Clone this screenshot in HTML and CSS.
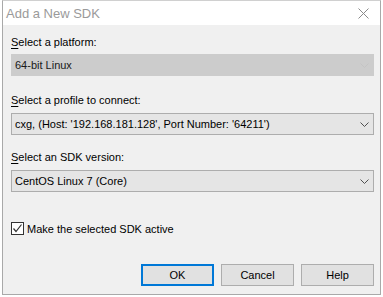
FILE: index.html
```html
<!DOCTYPE html>
<html>
<head>
<meta charset="utf-8">
<link rel="stylesheet" href="styles.css">
</head>
<body>
<div class="window">
  <div class="titlebar">
    <span class="title">Add a New SDK</span>
    <svg class="close" width="11" height="11" viewBox="0 0 11 11"><path d="M0.5 0.5 L10.5 10.5 M10.5 0.5 L0.5 10.5" stroke="#8a8a8a" stroke-width="1" fill="none"/></svg>
  </div>
  <div class="content">
    <div class="label label-first"><u>S</u>elect a platform:</div>
    <div class="combo disabled">
      <span class="value">64-bit Linux</span>
      <svg class="chev" width="9" height="5" viewBox="0 0 9 5"><path d="M0.5 0.5 L4.5 4.5 L8.5 0.5" stroke="#c4c4c4" fill="none"/></svg>
    </div>
    <div class="label label-second"><u>S</u>elect a profile to connect:</div>
    <div class="combo">
      <span class="value">cxg, (Host: '192.168.181.128', Port Number: '64211')</span>
      <svg class="chev" width="9" height="5" viewBox="0 0 9 5"><path d="M0.5 0.5 L4.5 4.5 L8.5 0.5" stroke="#505050" fill="none"/></svg>
    </div>
    <div class="label label-third"><u>S</u>elect an SDK version:</div>
    <div class="combo">
      <span class="value">CentOS Linux 7 (Core)</span>
      <svg class="chev" width="9" height="5" viewBox="0 0 9 5"><path d="M0.5 0.5 L4.5 4.5 L8.5 0.5" stroke="#505050" fill="none"/></svg>
    </div>
    <div class="check-row">
      <span class="checkbox"><svg width="11" height="11" viewBox="0 0 11 11"><path d="M1.5 5.5 L4 8.5 L9.5 1.5" stroke="#333" stroke-width="1.2" fill="none"/></svg></span>
      <span class="check-label">Make the selected SDK active</span>
    </div>
    <div class="buttons">
      <button class="btn btn-default">OK</button>
      <button class="btn">Cancel</button>
      <button class="btn">Help</button>
    </div>
  </div>
</div>
</body>
</html>
```
FILE: styles.css
```css
html, body {
  margin: 0;
  padding: 0;
  background: #ffffff;
}
body {
  font-family: "Liberation Sans", Arial, sans-serif;
  font-size: 11px;
  color: #000;
}
.window {
  margin-left: 2px;
  width: 379px;
  height: 295px;
  box-sizing: border-box;
  border: 1px solid #a9a9a9;
  border-top-color: #d0d0d0;
  background: #f0f0f0;
  display: flex;
  flex-direction: column;
}
.titlebar {
  height: 24px;
  background: #ffffff;
  display: flex;
  align-items: center;
  padding-left: 3px;
  padding-right: 11px;
  flex: none;
}
.title {
  font-size: 13px;
  color: #9a9a9a;
  flex: 1;
}
.close {
  display: block;
  margin-top: 1px;
}
.content {
  display: flex;
  flex-direction: column;
  padding: 0 6px 0 8px;
}
.label {
  line-height: 15px;
  height: 15px;
}
.label u {
  text-decoration-thickness: 1px;
  text-underline-offset: 2px;
}
.label-first {
  margin-top: 10px;
  margin-bottom: 4px;
}
.label-second {
  margin-top: 17px;
  margin-bottom: 5px;
}
.label-third {
  margin-top: 15px;
  margin-bottom: 5px;
}
.combo {
  height: 22px;
  box-sizing: border-box;
  border: 1px solid #adadad;
  background: #e5e5e5;
  display: flex;
  align-items: center;
  padding: 0 4px 0 3px;
}
.combo.disabled {
  background: #cccccc;
  border-color: #cccccc;
  color: #1a1a1a;
}
.value {
  flex: 1;
  white-space: nowrap;
  overflow: hidden;
}
.chev {
  display: block;
}
.check-row {
  margin-top: 29px;
  display: flex;
  align-items: center;
  height: 15px;
}
.checkbox {
  width: 13px;
  height: 13px;
  box-sizing: border-box;
  border: 1px solid #333;
  background: #fff;
  display: flex;
  align-items: center;
  justify-content: center;
  margin-right: 3px;
}
.checkbox svg {
  display: block;
}
.buttons {
  margin-top: 28px;
  display: flex;
  justify-content: flex-end;
  gap: 7px;
}
.btn {
  width: 73px;
  height: 22px;
  box-sizing: border-box;
  border: 1px solid #adadad;
  background: #e1e1e1;
  font-family: inherit;
  font-size: 11px;
  color: #000;
  padding: 0;
  margin: 0;
}
.btn-default {
  border: 2px solid #0078d7;
}
```
